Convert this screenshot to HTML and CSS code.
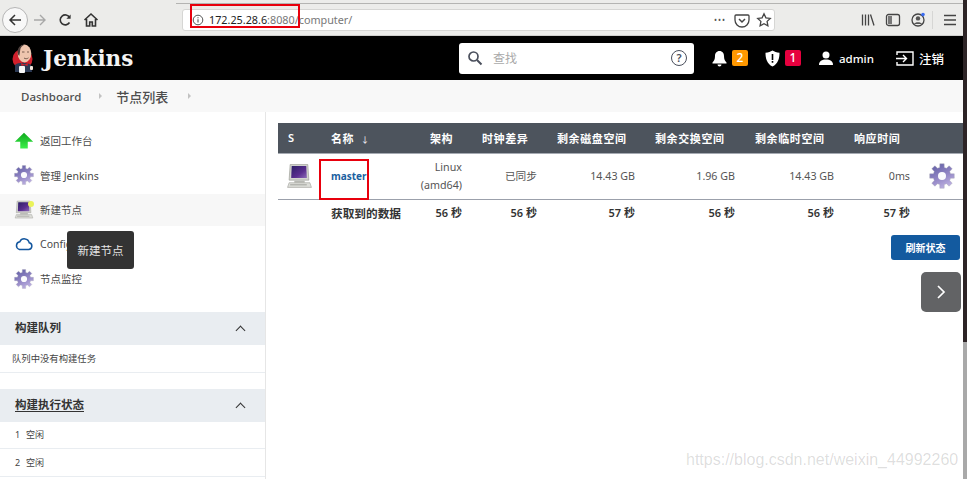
FILE: index.html
```html
<!DOCTYPE html>
<html lang="zh">
<head>
<meta charset="utf-8">
<title>节点列表 [Jenkins]</title>
<link rel="stylesheet" href="styles.css">
</head>
<body>
<svg class="defs" width="0" height="0" aria-hidden="true">
  <defs>
    <linearGradient id="gearFill" x1="0.2" y1="0" x2="0.7" y2="1">
      <stop offset="0" stop-color="#625fa6"/><stop offset="0.55" stop-color="#9488c6"/><stop offset="1" stop-color="#c0b4e4"/>
    </linearGradient>
    <linearGradient id="screenFill" x1="0" y1="0" x2="1" y2="1">
      <stop offset="0" stop-color="#2c1f66"/><stop offset="0.6" stop-color="#5a2e8f"/><stop offset="1" stop-color="#8d6cb8"/>
    </linearGradient>
    <linearGradient id="arrowFill" x1="0" y1="0" x2="0" y2="1">
      <stop offset="0" stop-color="#0fa81d"/><stop offset="1" stop-color="#3bf04a"/>
    </linearGradient>
    <symbol id="gear" viewBox="0 0 24 24">
      <path fill="url(#gearFill)" stroke="#a9a8b6" stroke-width=".4" d="M9.880 4.080 10 .67h4l.12 3.410 1.980.82 2.500-2.320 2.820 2.820-2.320 2.500.82 1.980 3.410.12v4l-3.410.12-.82 1.980 2.320 2.500-2.820 2.820-2.500-2.320-1.980.82-.12 3.410h-4l-.12-3.410-1.980-.82-2.500 2.320-2.820-2.820 2.320-2.500-.82-1.980-3.410-.12v-4l3.410-.12.82-1.980-2.320-2.500 2.820-2.820 2.500 2.320z"/>
      <circle cx="12" cy="12" r="3.700" fill="#fbfbfe"/>
    </symbol>
    <symbol id="computer" viewBox="0 0 26 26">
      <path fill="#d3d4cf" stroke="#96978f" stroke-width=".6" d="M4 1.500h17l1 15H3z"/>
      <path fill="url(#screenFill)" d="M5.500 3h14l.6 11.500H5z"/>
      <path fill="#b7b8b3" d="M8 17h10v2H8z"/>
      <path fill="#dcddd8" stroke="#a1a29c" stroke-width=".6" d="M3 19h20l1.500 4.500H1.500z"/>
      <path fill="#a4a5a0" d="M4 20.500h16v1H4z"/>
    </symbol>
  </defs>
</svg>

<div class="window">
  <div class="page">
    <div class="toolbar">
      <div class="tabline"></div>
      <div class="toolrow">
        <span class="backbtn">
          <svg width="16" height="16" viewBox="0 0 16 16"><path d="M14 8H3M8 3 3 8l5 5" fill="none" stroke="#333" stroke-width="1.500"/></svg>
        </span>
        <svg class="navicon forward" width="16" height="16" viewBox="0 0 16 16"><path d="M2 8h11M8 3l5 5-5 5" fill="none" stroke="#a8a8a8" stroke-width="1.400"/></svg>
        <svg class="navicon reload" width="16" height="16" viewBox="0 0 16 16"><path d="M12.500 10.500A5 5 0 1 1 12.600 5.500" fill="none" stroke="#333" stroke-width="1.600"/><path d="M13.600 2.500v4.200H9.400z" fill="#333"/></svg>
        <svg class="navicon home" width="16" height="16" viewBox="0 0 16 16"><path d="M1.500 8 8 2l6.500 6M3.500 7v7h3.200v-4h2.600v4h3.200V7" fill="none" stroke="#333" stroke-width="1.600"/></svg>
        <div class="urlbar">
          <svg class="info" width="12" height="12" viewBox="0 0 12 12"><circle cx="6" cy="6" r="4.800" fill="none" stroke="#555"/><path d="M6 5.200v3.400M6 3.200v1" stroke="#555" stroke-width="1.100"/></svg>
          <span class="url"><span class="host">172.25.28.6</span>:8080/computer/</span>
          <span class="url-actions">
            <span class="dots">•••</span>
            <svg width="16" height="16" viewBox="0 0 16 16"><path d="M2 3h12a1 1 0 0 1 1 1v4a7 7 0 0 1-14 0V4a1 1 0 0 1 1-1z" fill="none" stroke="#444" stroke-width="1.300"/><path d="m5 7 3 3 3-3" fill="none" stroke="#444" stroke-width="1.500"/></svg>
            <svg width="16" height="16" viewBox="0 0 16 16"><path d="m8 1.800 1.900 4 4.400.6-3.200 3 .8 4.400L8 11.700l-3.900 2.100.8-4.400-3.200-3 4.400-.6z" fill="none" stroke="#444" stroke-width="1.300"/></svg>
          </span>
        </div>
        <div class="browser-tools">
          <svg width="16" height="16" viewBox="0 0 16 16"><path d="M2.500 2.500v11M5.500 2.500v11M8.500 2.500v11M10.500 2.500l3.500 11" stroke="#444" stroke-width="1.300" fill="none"/></svg>
          <svg width="16" height="16" viewBox="0 0 16 16"><rect x="1.500" y="2.500" width="13" height="11" rx="2" fill="none" stroke="#444" stroke-width="1.300"/><rect x="3" y="4" width="4" height="8" fill="#777"/></svg>
          <svg width="16" height="16" viewBox="0 0 16 16"><circle cx="8" cy="8" r="6" fill="none" stroke="#444" stroke-width="1.300"/><circle cx="8" cy="6.400" r="2.200" fill="#555"/><path d="M4 12c1-2.400 7-2.400 8 0" fill="#555"/><circle cx="13" cy="2.600" r="1.800" fill="#3a6cf0"/></svg>
          <span class="tool-sep"></span>
          <svg width="16" height="16" viewBox="0 0 16 16"><path d="M2 3.500h12M2 8h12M2 12.500h12" stroke="#444" stroke-width="1.400"/></svg>
        </div>
      </div>
    </div>

    <header class="topbar">
      <div class="brand">
        <svg class="butler" width="22" height="29" viewBox="0 0 22 29">
          <circle cx="10.500" cy="15" r="10" fill="#d1202c"/>
          <ellipse cx="12.500" cy="9.500" rx="6.800" ry="9" fill="#eec5ae"/>
          <path d="M5.800 10C5 4 8 .5 13 .5c-3 1-4.500 3-4.800 5.500-.2 2-.5 4-1 6z" fill="#4b3d3a"/>
          <path d="M10 8h2.500M15 8h2M12 14c1.500 1 3 1 4.500-.2" stroke="#5a4238" stroke-width=".8" fill="none"/>
          <path d="M3 21c3-3 12-3 16 0l1 7H3z" fill="#2c3a55"/>
          <path d="m9 19 3.500 1.500L16 19l-.5 3-3-1-3 1z" fill="#d1202c"/>
          <rect x="7" y="22" width="6" height="7" rx="1" fill="#f6f6f6"/>
          <rect x="18" y="22" width="3" height="4" rx="1" fill="#f0e4da"/>
        </svg>
        <span class="wordmark">Jenkins</span>
      </div>
      <div class="search">
        <svg width="16" height="16" viewBox="0 0 16 16"><circle cx="6.500" cy="6.500" r="4.500" fill="none" stroke="#4a4f5c" stroke-width="1.700"/><path d="m10 10 4.500 4.500" stroke="#4a4f5c" stroke-width="1.900"/></svg>
        <span class="search-text">查找</span>
        <span class="help">?</span>
      </div>
      <div class="actions">
        <span class="action bell">
          <svg width="15" height="17" viewBox="0 0 15 17"><path d="M7.500 1c-3 0-4.500 2.400-4.500 5 0 3.500-1 5-2.500 6.500V13.500h14v-1C13 11 12 9.500 12 6c0-2.600-1.500-5-4.500-5z" fill="#fff"/><path d="M5.500 14.500a2 2 0 0 0 4 0z" fill="#fff"/></svg>
          <span class="badge orange">2</span>
        </span>
        <span class="action shield">
          <svg width="15" height="17" viewBox="0 0 15 17"><path d="M7.500 .5c2 1.300 4 2 7 2.200 0 6-1.500 11-7 13.800C2 13.700 .5 8.700.5 2.700c3-.2 5-.9 7-2.200z" fill="#fff"/><path d="M6.700 4h1.600v6H6.700zM6.700 11h1.600v1.700H6.700z" fill="#000"/></svg>
          <span class="badge red">1</span>
        </span>
        <span class="action user">
          <svg width="14" height="14" viewBox="0 0 14 14"><circle cx="7" cy="4" r="3.500" fill="#fff"/><path d="M0 14c0-4 3-5.500 7-5.500s7 1.500 7 5.500z" fill="#fff"/></svg>
          <span>admin</span>
        </span>
        <span class="action logout">
          <svg width="18" height="15" viewBox="0 0 18 15"><path d="M1 4V1h16v13H1v-3" fill="none" stroke="#fff" stroke-width="1.400"/><path d="M0 7.500h10M7 4l3.500 3.500L7 11" fill="none" stroke="#fff" stroke-width="1.400"/></svg>
          <span>注销</span>
        </span>
      </div>
    </header>

    <nav class="crumbs">
      <span class="crumb-en">Dashboard</span><span class="caret"></span><span class="crumb-zh">节点列表</span><span class="caret"></span>
    </nav>

    <div class="main">
      <aside class="sidebar">
        <ul class="tasks">
          <li>
            <svg class="task-icon" width="20" height="20" viewBox="0 0 24 24"><path d="M12 2 23 13h-6.500v8h-9v-8H1z" fill="url(#arrowFill)"/></svg>
            <span>返回工作台</span>
          </li>
          <li>
            <svg class="task-icon" width="20" height="20"><use href="#gear"/></svg>
            <span>管理 Jenkins</span>
          </li>
          <li class="hover">
            <span class="computer-new">
              <svg class="task-icon" width="20" height="20"><use href="#computer"/></svg>
              <i class="spark"></i>
            </span>
            <span>新建节点</span>
          </li>
          <li>
            <svg class="task-icon" width="20" height="20" viewBox="0 0 24 24"><path d="M6.500 18.500h11a4 4 0 0 0 .8-7.900 6 6 0 0 0-11.300-1.300 4.700 4.700 0 0 0-.5 9.200z" fill="none" stroke="#13569e" stroke-width="1.800"/></svg>
            <span>Configure Clouds</span>
          </li>
          <li>
            <svg class="task-icon" width="20" height="20"><use href="#gear"/></svg>
            <span>节点监控</span>
          </li>
        </ul>

        <section class="pane">
          <h2 class="pane-head"><span>构建队列</span><i class="chev"></i></h2>
          <div class="pane-row queue">队列中没有构建任务</div>
        </section>

        <section class="pane">
          <h2 class="pane-head"><span class="linked">构建执行状态</span><i class="chev"></i></h2>
          <div class="pane-row"><span class="num">1</span>空闲</div>
          <div class="pane-row"><span class="num">2</span>空闲</div>
        </section>
      </aside>

      <main class="content">
        <table class="nodes">
          <colgroup>
            <col class="c-s"><col class="c-name"><col class="c-arch"><col class="c-clock"><col class="c-disk"><col class="c-swap"><col class="c-temp"><col class="c-resp"><col class="c-gear">
          </colgroup>
          <thead>
            <tr><th>S</th><th>名称&nbsp;<span class="sort">↓</span></th><th>架构</th><th>时钟差异</th><th>剩余磁盘空间</th><th>剩余交换空间</th><th>剩余临时空间</th><th>响应时间</th><th></th></tr>
          </thead>
          <tbody>
            <tr>
              <td class="icon-cell"><svg width="27" height="27"><use href="#computer"/></svg></td>
              <td class="left"><a class="node-link">master</a></td>
              <td>Linux<br>(amd64)</td>
              <td>已同步</td>
              <td>14.43 GB</td>
              <td>1.96 GB</td>
              <td>14.43 GB</td>
              <td>0ms</td>
              <td class="gear-cell"><svg width="26" height="26"><use href="#gear"/></svg></td>
            </tr>
          </tbody>
          <tfoot>
            <tr><td></td><td class="left">获取到的数据</td><td>56 秒</td><td>56 秒</td><td>57 秒</td><td>56 秒</td><td>56 秒</td><td>57 秒</td><td></td></tr>
          </tfoot>
        </table>
        <div class="refresh-row"><button class="refresh" type="button">刷新状态</button></div>
      </main>
    </div>
  </div>
  <div class="edge"><div class="edge-dark"></div></div>
</div>

<div class="tooltip">新建节点</div>
<button class="next" type="button" aria-label="next">
  <svg width="12" height="14" viewBox="0 0 12 14"><path d="m3 1 6 6-6 6" fill="none" stroke="#fff" stroke-width="1.700"/></svg>
</button>
<div class="mark mark-url"></div>
<div class="mark mark-node"></div>
<div class="watermark">https://blog.csdn.net/weixin_44992260</div>
</body>
</html>
```

FILE: styles.css
```css
* { box-sizing: border-box; }
html, body { margin: 0; padding: 0; height: 479px; overflow: hidden; background: #fff; }
body { position: relative; font-family: "Noto Sans", "Noto Sans CJK SC", sans-serif; font-size: 11px; color: #333; }
.defs { position: absolute; }
.window { display: flex; width: 967px; height: 479px; }
.page { width: 963px; height: 479px; display: flex; flex-direction: column; overflow: hidden; flex: none; }
.edge { width: 4px; background: #a9a9a9; flex: none; }
.edge-dark { height: 342px; background: #2d2426; }

/* browser toolbar */
.toolbar { height: 36px; background: #ececea; border-bottom: 1px solid #cfcfcd; flex: none; }
.tabline { height: 4px; margin-left: 176px; border-bottom: 1px solid #b4b4b2; }
.toolrow { display: flex; align-items: center; height: 31px; padding-left: 2px; }
.backbtn { width: 26px; height: 26px; border: 1px solid #b5b5b5; border-radius: 50%; background: #f8f8f8; display: flex; align-items: center; justify-content: center; flex: none; }
.navicon { flex: none; }
.forward { margin-left: 4px; }
.reload { margin-left: 9px; }
.home { margin-left: 10px; }
.urlbar { display: flex; align-items: center; margin-left: 83px; width: 593px; height: 22px; background: #fff; border: 1px solid #d6d6d4; border-radius: 3px; padding: 0 2px 0 9px; flex: none; }
.url { margin-left: 5px; color: #777; font-size: 10.800px; }
.host { color: #222; }
.url-actions { margin-left: auto; display: flex; align-items: center; gap: 6px; }
.dots { font-size: 8px; color: #555; letter-spacing: 1px; margin-right: 2px; }
.browser-tools { display: flex; align-items: center; gap: 9px; margin-left: 85px; }
.tool-sep { width: 1px; height: 18px; background: #d6d6d4; margin-left: -3px; }

/* Jenkins header */
.topbar { height: 44px; background: #000; display: flex; align-items: center; color: #fff; flex: none; padding-left: 12px; }
.brand { display: flex; align-items: center; width: 447px; flex: none; }
.wordmark { font-family: "DejaVu Serif", serif; font-weight: 700; font-size: 21.500px; margin-left: 9px; color: #f4f4f4; }
.search { width: 235px; height: 31px; background: #fff; border-radius: 3px; display: flex; align-items: center; padding: 0 7px 0 8px; color: #a9a9a9; flex: none; }
.search-text { margin-left: 10px; font-size: 12px; }
.help { margin-left: auto; width: 16px; height: 16px; border: 1.500px solid #4a4f5c; border-radius: 50%; color: #4a4f5c; font-size: 11px; font-weight: 600; line-height: 13px; text-align: center; }
.actions { display: flex; align-items: center; margin-left: 18px; font-weight: 500; }
.action { display: flex; align-items: center; }
.bell { gap: 5px; width: 53px; }
.shield { gap: 5px; width: 54px; }
.user { gap: 6px; width: 77px; font-size: 11.500px; }
.logout { gap: 5px; font-size: 12.500px; }
.badge { width: 16px; height: 16px; border-radius: 2px; text-align: center; line-height: 16px; font-size: 12px; font-weight: 500; }
.orange { background: #ff9800; }
.red { background: #e6003e; }

/* breadcrumb */
.crumbs { height: 32px; background: #f8f8f8; display: flex; align-items: center; padding-left: 21px; color: #4e4e4e; flex: none; }
.crumb-en { font-size: 11.500px; font-weight: 500; }
.crumb-zh { font-size: 13px; font-weight: 500; }
.caret { width: 0; height: 0; border-left: 3px solid #c2c2c2; border-top: 3px solid transparent; border-bottom: 3px solid transparent; margin: 0 14px 0 18px; }
.crumb-zh + .caret { margin-left: 20px; }

/* layout */
.main { display: flex; flex: 1; min-height: 0; }
.sidebar { width: 266px; border-right: 1px solid #e6e6e6; flex: none; }
.content { flex: 1; padding: 11px 0 0 12px; }

/* side tasks */
.tasks { list-style: none; margin: 0; padding: 11.500px 0 0; }
.tasks li { height: 34.500px; display: flex; align-items: center; padding-left: 14px; font-size: 10.500px; color: #4a4a4a; }
.tasks li.hover { height: 32px; margin: 1.250px 0; background: #f7f7f7; }
.task-icon { display: block; flex: none; }
.tasks li > span:last-child { margin-left: 6px; }
.computer-new { position: relative; display: block; flex: none; }
.spark { position: absolute; right: 0; top: 1px; width: 6px; height: 6px; border-radius: 50%; background: #eaf35a; }

/* panes */
.pane { margin-top: 16px; }
.pane-head { margin: 0; height: 33px; background: #e9edf1; display: flex; align-items: center; justify-content: space-between; padding: 0 21px 3px 15px; font-size: 11.500px; font-weight: 600; color: #333; }
.linked { text-decoration: underline; text-underline-offset: 2px; }
.chev { width: 7px; height: 7px; border-left: 1.500px solid #333; border-top: 1.500px solid #333; transform: rotate(45deg); margin-top: 7px; }
.pane-row { height: 27.500px; border-bottom: 1px solid #e9edf1; display: flex; align-items: center; padding-left: 15px; font-size: 9px; color: #444; }
.pane-row.queue { padding-left: 12px; font-size: 9.330px; }
.num { width: 11px; }

/* node table */
.nodes { width: 685px; table-layout: fixed; border-collapse: collapse; font-size: 10.700px; color: #555; }
.c-s { width: 43px; } .c-name { width: 99px; } .c-arch { width: 52px; } .c-clock { width: 75px; } .c-disk { width: 98px; } .c-swap { width: 100px; } .c-temp { width: 99px; } .c-resp { width: 76px; } .c-gear { width: 43px; }
.nodes th { height: 30px; background: #4d545d; color: #fff; text-align: left; padding: 0 0 0 10px; font-size: 11px; font-weight: 600; letter-spacing: .6px; white-space: nowrap; border-bottom: 1px solid #a5aab2; }
.sort { font-size: 8.500px; font-weight: 400; margin-left: 3px; }
.nodes tbody td { height: 46px; text-align: right; padding: 0 10px 0 0; line-height: 18px; border-bottom: 1px solid #9ba0ab; }
.nodes td.left { text-align: left; padding-left: 10px; }
.nodes td.icon-cell { padding: 0 0 0 8px; text-align: left; }
.nodes td.gear-cell { padding: 0 0 0 9px; text-align: left; }
.nodes svg { display: block; }
.node-link { color: #1a5f9f; font-weight: 700; font-size: 10px; }
.nodes tfoot td { height: 26px; text-align: right; padding: 0 10px 0 0; font-weight: 600; color: #333; font-size: 11px; white-space: nowrap; }
.nodes tfoot td.left { padding-left: 10px; font-size: 11.670px; }
.refresh-row { display: flex; justify-content: flex-end; margin-top: 10px; padding-right: 3px; }
.refresh { width: 69px; height: 25px; border: 0; border-radius: 3px; background: #135a9f; color: #fff; font: 600 10px "Noto Sans", "Noto Sans CJK SC", sans-serif; padding: 0; }

/* overlays */
.tooltip { position: absolute; left: 67px; top: 231px; width: 67px; height: 38px; background: #333; border-radius: 3px; color: #e4e4e4; font-size: 11.500px; display: flex; align-items: center; justify-content: center; }
.next { position: absolute; left: 921px; top: 272px; width: 40px; height: 40px; background: #626365; border: 0; border-radius: 5px; display: flex; align-items: center; justify-content: center; padding: 0; }
.mark { position: absolute; border: 2px solid #e8000d; }
.mark-url { left: 190px; top: 4px; width: 110px; height: 24px; }
.mark-node { left: 319px; top: 159px; width: 50px; height: 41px; }
.watermark { position: absolute; left: 686px; top: 451px; font-family: "Liberation Sans", sans-serif; font-size: 16px; color: rgba(0,0,0,.14); white-space: nowrap; }
```
